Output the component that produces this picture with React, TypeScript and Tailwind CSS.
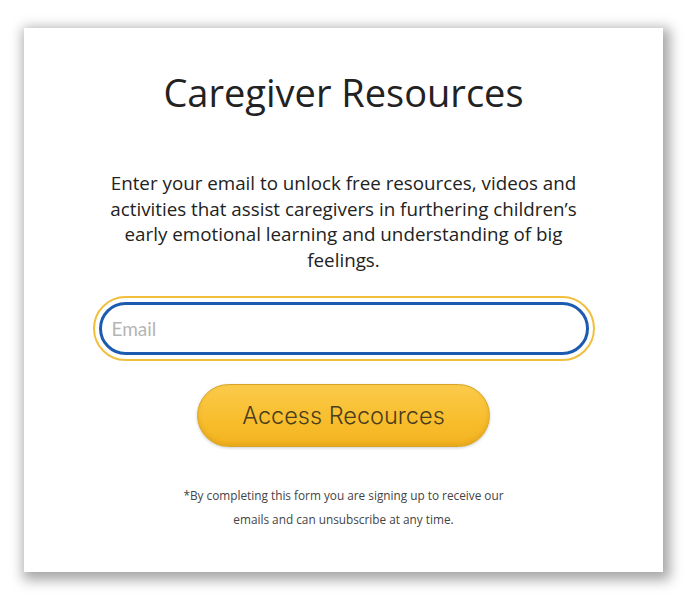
import { useState } from "react";

export default function App() {
  const [email, setEmail] = useState("");

  return (
    <div className="min-h-screen w-full bg-white pl-[24px] pt-[28px]">
      <div
        className="flex h-[544px] w-[639px] flex-col items-center bg-white shadow-[3px_4px_12px_4px_rgba(0,0,0,0.35)]"
        style={{ fontFamily: "'Open Sans', sans-serif" }}
      >
        <h1 className="mt-[38px] text-[38px] leading-[52px] text-[#222]">Caregiver Resources</h1>

        <p className="mt-[53px] w-[490px] text-center text-[18.8px] leading-[25.5px] text-[#222]">
          Enter your email to unlock free resources, videos and activities that assist caregivers in furthering
          children’s early emotional learning and understanding of big feelings.
        </p>

        <div className="mt-[23px] rounded-full border-[2px] border-[#f2bf3c] p-[4px]">
          <input
            type="email"
            value={email}
            onChange={(e) => setEmail(e.target.value)}
            placeholder="Email"
            className="h-[53px] w-[490px] rounded-full border-[3px] border-[#1d5bb0] bg-white px-[10px] text-[19px] text-[#333] outline-none placeholder:text-[#b5b5b5]"
            style={{ fontFamily: "Lato, sans-serif" }}
          />
        </div>

        <button
          className="mt-[23px] h-[63px] w-[293px] rounded-full border border-[#d9a528] bg-[linear-gradient(180deg,#fbcb4a_0%,#f8bd2c_60%,#f3b321_100%)] text-[23.5px] font-light text-[#4a3d1c] shadow-[inset_0_-2px_4px_rgba(180,120,0,0.25),0_1px_3px_rgba(0,0,0,0.2)]"
          style={{ fontFamily: "Inter, sans-serif" }}
        >
          Access Recources
        </button>

        <p className="mt-[36px] text-center text-[11.8px] leading-[24px] text-[#444]">
          *By completing this form you are signing up to receive our
          <br />
          emails and can unsubscribe at any time.
        </p>
      </div>
    </div>
  );
}
